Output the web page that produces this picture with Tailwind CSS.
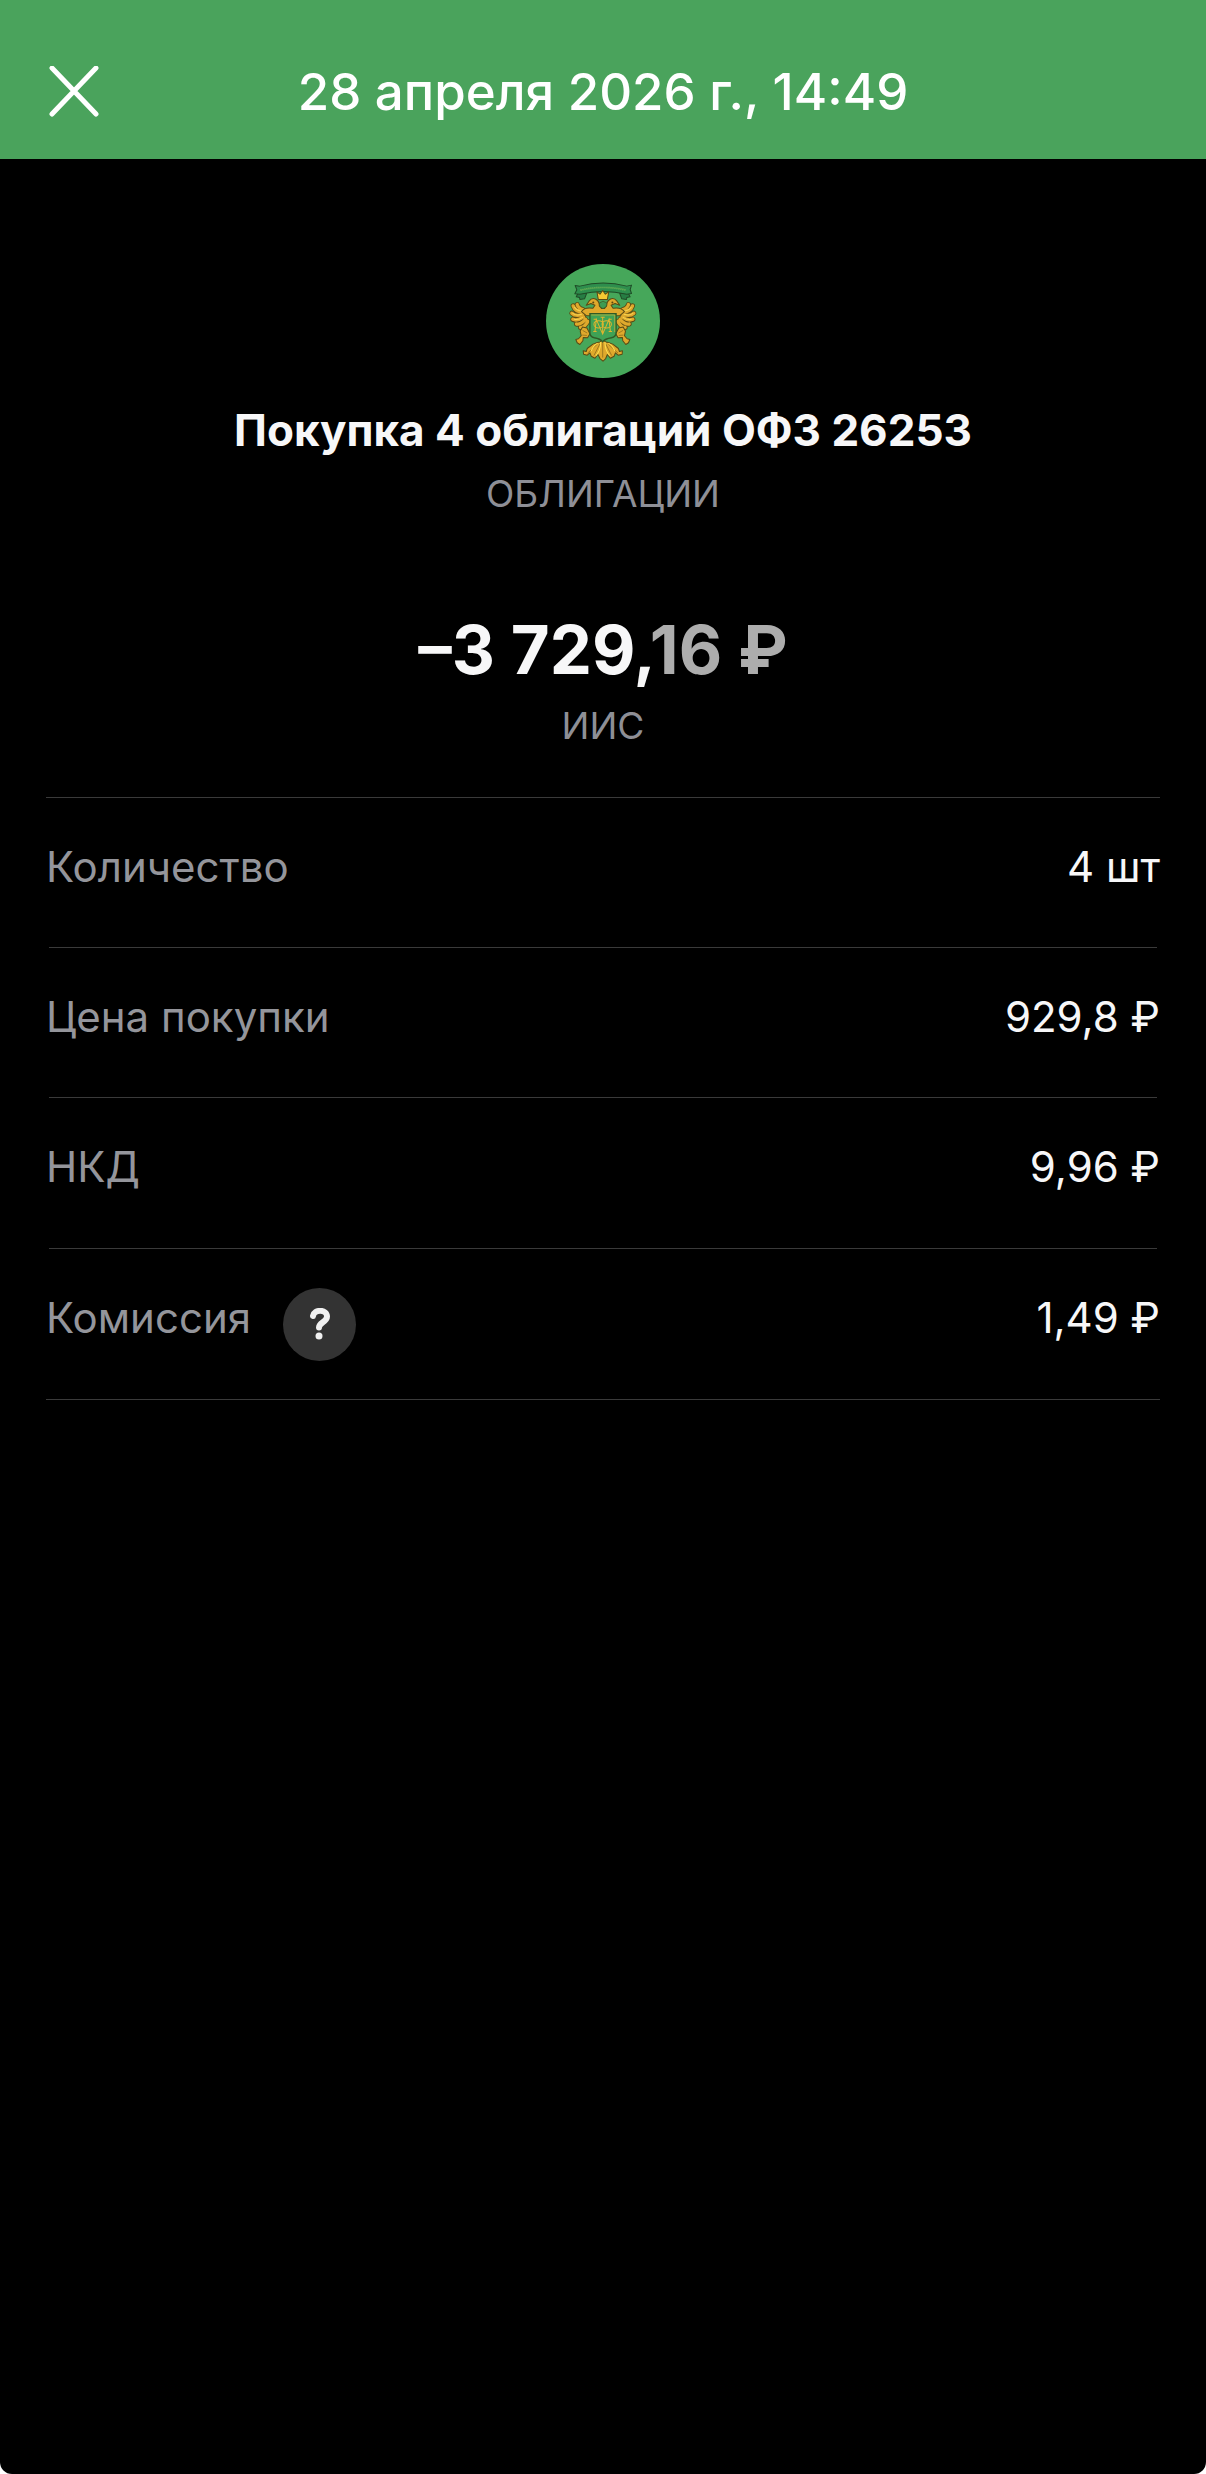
<!DOCTYPE html>
<html lang="ru">
<head>
  <meta charset="UTF-8">
  <title>Покупка 4 облигаций ОФЗ 26253</title>
  <meta name="viewport" content="width=device-width, initial-scale=1.0"/>
  <script src="https://cdn.jsdelivr.net/npm/@tailwindcss/browser@4"></script>
</head>
<body class="bg-white font-['Inter','Liberation_Sans',sans-serif]">
  <div class="flex min-h-screen flex-col rounded-b-xl bg-black text-[#f7f7f8]">
    <header class="grid grid-cols-[64px_1fr_64px] items-center bg-[#4aa35c] px-[42px] pt-12 pb-6 text-white">
      <button type="button" aria-label="Закрыть" class="flex size-16 items-center justify-center">
        <svg class="size-[52px]" viewBox="0 0 52 52" fill="none" stroke="currentColor" stroke-width="5" stroke-linecap="round">
          <path d="M4 2 48 48M48 2 4 48"/>
        </svg>
      </button>
      <h1 class="text-center text-[51px] leading-[87px] font-medium">28 апреля 2026 г., 14:49</h1>
    </header>

    <main class="px-[46px] pt-[105px]">
      <section class="flex flex-col items-center text-center">
        <!-- issuer emblem -->
        <svg class="size-[114px]" viewBox="42 34 340 340" aria-hidden="true">
          <circle cx="212" cy="204" r="170" fill="#46a75a"/>
          <g stroke="#1f4a26" stroke-width="3" stroke-linejoin="round">
            <path fill="#267d43" d="M137 122l-5 10 10 2 1 6 14-2 6-16zM288 122l5 10-10 2-1 6-14-2-6-16z"/>
            <path fill="#2e8e4d" d="M129 98l14 2q69-18 140 0l14-3-4 13 4 12-14 2q-70-16-140 0l-15-1 6-12z"/>
          </g>
          <path d="M145 112q67-16 136 0" fill="none" stroke="#7fba55" stroke-width="5" stroke-dasharray="3 3"/>
          <!-- wing, mirrored below -->
          <g id="wing" fill="none" stroke-linecap="round">
            <path stroke="#5a4a14" stroke-width="15" d="M152 170Q138 166 135 155M152 176Q130 178 123 159M152 184Q130 192 119 181M154 192Q136 205 122 199M160 199Q144 216 133 213M167 205Q156 224 145 223"/>
            <path stroke="#dfa92c" stroke-width="10" d="M152 170Q138 166 135 155M152 176Q130 178 123 159M152 184Q130 192 119 181M154 192Q136 205 122 199M160 199Q144 216 133 213M167 205Q156 224 145 223"/>
            <path stroke="#f6d352" stroke-width="3" d="M150 174Q134 174 127 163M148 184Q132 189 122 181M151 193Q137 202 127 199"/>
          </g>
          <use href="#wing" transform="translate(423 0) scale(-1 1)"/>
          <g fill="#dfa92c" stroke="#5a4a14" stroke-width="3" stroke-linejoin="round">
            <!-- heads and shoulders -->
            <path d="M148 176q8-14 34-10l6-9-12-5-14 5 9-13q8-11 20-5 11 7 10 20l7 8h8l7-8q-1-13 10-20 12-6 20 5l9 13-14-5-12 5 6 9q24-4 34 10l-14 12H162z"/>
            <!-- crown -->
            <path fill="#f5c932" d="M194 117l9 7 8-11 8 11 10-7-4 23h-27z"/>
            <!-- tail -->
            <path d="M203 267l8-8 9 8 8 1 13 5 17 13 3 9 9-2-1 10-12 3-8-7-4 10-11 6-9-11-5 12-8 8-9-8-6-12-9 11-11-6-4-10-8 7-11-3-1-10 9 2 3-9 17-13 13-5z"/>
            <!-- legs and claws -->
            <path d="M151 222l13 3 9 17-7 12-13-1-1 10-9 11-8-5-4-10 8-2 8-9-3-14z"/>
            <path d="M272 222l-13 3-9 17 7 12 13-1 1 10 9 11 8-5 4-10-8-2-8-9 3-14z"/>
          </g>
          <g fill="none" stroke="#80631a" stroke-width="2">
            <path d="M211 270v43M203 272l-18 35M220 272l18 35M195 273l-29 27M228 273l29 27M151 232l14 8M272 232l-14 8M150 246l14 1M273 246l-14 1"/>
          </g>
          <path d="M205 267q0 26-14 40M218 267q0 26 14 40M196 270q-15 9-19 24M228 270q15 9 19 24" fill="none" stroke="#ffe052" stroke-width="3"/>
          <circle cx="183" cy="149" r="3" fill="#584611"/>
          <circle cx="240" cy="149" r="3" fill="#584611"/>
          <path d="M202 150l10-5 11 5q2 12-11 17-13-5-10-17z" fill="#3e9b52" stroke="#3c5520" stroke-width="2"/>
          <!-- shield with monogram -->
          <path d="M173 182h78v57q0 12-14 15-19 3-26 12-7-9-25-12-13-3-13-15z" fill="#3fa255" stroke="#315a25" stroke-width="4"/>
          <path d="M177 186h70v51" fill="none" stroke="#d8b637" stroke-width="2"/>
          <g fill="none" stroke="#e1b52e" stroke-width="3">
            <path d="M183 235h10M188 235l4-36 19 44 19-44 4 36M229 235h10M211 193v50M205 193h12M184 199h10M228 199h10"/>
            <ellipse cx="199" cy="214" rx="14" ry="11"/>
            <ellipse cx="223" cy="214" rx="14" ry="11"/>
          </g>
        </svg>
        <h2 class="mt-6 text-[44px] leading-[56px] font-bold">Покупка 4 облигаций ОФЗ 26253</h2>
        <p class="mt-3 text-[37px] leading-[48px] text-[#8e8f96]">ОБЛИГАЦИИ</p>
        <p class="mt-[92px] text-[67px] leading-[80px] font-bold">–3 729,<span class="text-[#adadad]">16 ₽</span></p>
        <p class="mt-3 text-[37px] leading-[48px] text-[#8e8f96]">ИИС</p>
      </section>

      <dl class="mt-[47px] border-y border-[#3a3a3a] text-[42px] leading-[52px]">
        <div class="mx-[3px] flex h-[150px] items-center justify-between border-b border-[#3a3a3a]">
          <dt class="-ml-[3px] pb-3 text-[#94959b]">Количество</dt>
          <dd class="-mr-[3px] pb-3">4 шт</dd>
        </div>
        <div class="mx-[3px] flex h-[150px] items-center justify-between border-b border-[#3a3a3a]">
          <dt class="-ml-[3px] pb-3 text-[#94959b]">Цена покупки</dt>
          <dd class="-mr-[3px] pb-3">929,8 ₽</dd>
        </div>
        <div class="mx-[3px] flex h-[151px] items-center justify-between border-b border-[#3a3a3a]">
          <dt class="-ml-[3px] pb-3 text-[#94959b]">НКД</dt>
          <dd class="-mr-[3px] pb-3">9,96 ₽</dd>
        </div>
        <div class="mx-[3px] flex h-[150px] items-center justify-between">
          <dt class="-ml-[3px] flex items-center gap-8 text-[#94959b]">
            <span class="pb-3">Комиссия</span>
            <button type="button" aria-label="О комиссии" class="flex size-[73px] items-center justify-center rounded-full bg-[#333333] text-[#f0f0f0]">
              <svg class="h-8 w-6" viewBox="0 0 24 32" fill="none" aria-hidden="true">
                <path d="M5 8C6 1 19 1 19 8.500c0 5.500-8 6-8 11" stroke="currentColor" stroke-width="6" stroke-linecap="round" stroke-linejoin="round"/>
                <circle cx="11" cy="28" r="3.500" fill="currentColor"/>
              </svg>
            </button>
          </dt>
          <dd class="-mr-[3px] pb-3">1,49 ₽</dd>
        </div>
      </dl>
    </main>
  </div>
</body>
</html>
